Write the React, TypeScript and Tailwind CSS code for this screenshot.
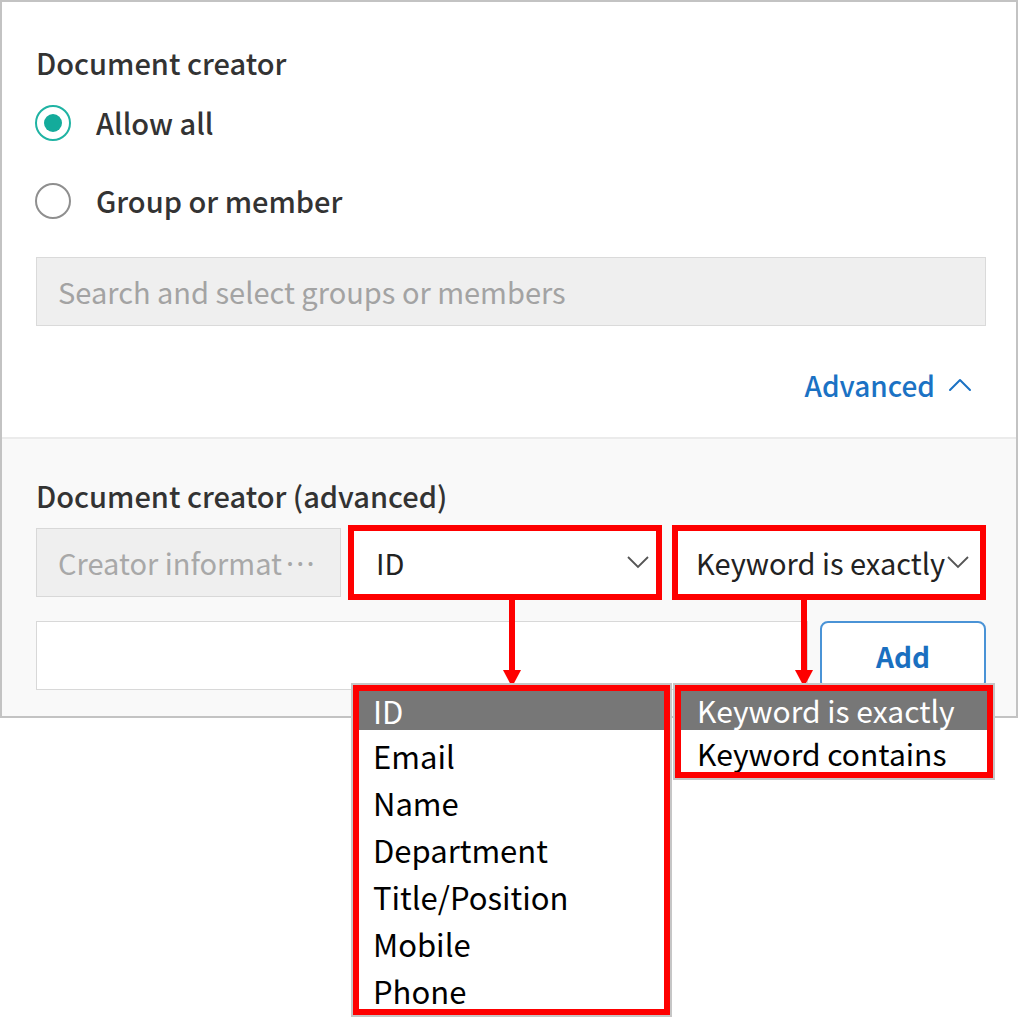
import { ChevronUp } from "lucide-react"

const font = { fontFamily: '"Noto Sans CJK KR", "Noto Sans", sans-serif' }

const idOptions = ["ID", "Email", "Name", "Department", "Title/Position", "Mobile", "Phone"]
const matchOptions = ["Keyword is exactly", "Keyword contains"]

// ── Radio ───────────────────────────────────────────────────
function Radio({ checked, label }: { checked: boolean; label: string }) {
  return (
    <div className="flex items-center h-[48px]">
      <span
        className={`ml-[-1px] w-[36px] h-[36px] rounded-full flex items-center justify-center bg-white ${
          checked ? "border-2 border-[#1fb3a3]" : "border-2 border-[#8f8f8f]"
        }`}
      >
        {checked && <span className="w-[18px] h-[18px] rounded-full bg-[#14ab9b]" />}
      </span>
      <span className="ml-[25px] text-[29px] font-medium text-[#333]">{label}</span>
    </div>
  )
}

// ── Chevron (select) ────────────────────────────────────────
function Caret({ className = "" }: { className?: string }) {
  return (
    <svg className={className} width="22" height="13" viewBox="0 0 22 13" fill="none">
      <polyline points="1,1 11,11 21,1" stroke="#555" strokeWidth="1.8" />
    </svg>
  )
}

// ── Arrow annotation ────────────────────────────────────────
function Arrow({ x }: { x: number }) {
  return (
    <svg className="absolute top-[598px]" style={{ left: x - 10 }} width="20" height="90" viewBox="0 0 20 90">
      <rect x="7" y="0" width="6" height="76" fill="#fe0000" />
      <polygon points="1,72 19,72 10,89" fill="#fe0000" />
    </svg>
  )
}

export default function App() {
  return (
    <div className="relative w-[1018px] h-[1019px] bg-white overflow-hidden" style={font}>
      {/* 패널 */}
      <div className="w-[1018px] h-[718px] border-2 border-[#c3c3c3] flex flex-col">
        <div className="h-[435px] shrink-0 bg-white pl-[34px] pr-[30px] pt-[40px]">
          <div className="text-[29px] leading-[40px] font-medium text-[#333]">Document creator</div>
          <div className="mt-[17px]">
            <Radio checked label="Allow all" />
          </div>
          <div className="mt-[30px]">
            <Radio checked={false} label="Group or member" />
          </div>
          <div className="mt-[32px] h-[69px] border border-[#dadada] bg-[#efefef] flex items-center px-[21px] text-[29px] text-[#a3a3a3]">
            Search and select groups or members
          </div>
          <div className="mt-[39px] h-[40px] flex justify-end items-center gap-[5px] pr-[6px] text-[#1b72c4]">
            <span className="text-[28px] font-medium">Advanced</span>
            <ChevronUp className="w-[40px] h-[40px]" strokeWidth={1.2} />
          </div>
        </div>

        <div className="flex-1 border-t-2 border-[#ebebeb] bg-[#f9f9f9] pl-[34px] pr-[30px] pt-[36px]">
          <div className="text-[29px] leading-[40px] font-medium text-[#333]">Document creator (advanced)</div>
          <div className="mt-[10px] h-[75px] flex items-center">
            <div className="w-[307px] h-[69px] border border-[#d8d8d8] bg-[#efefef] flex items-center pl-[21px] text-[29px] text-[#a8a8a8] whitespace-nowrap">
              Creator informat<span className="tracking-[-6px]">···</span>
            </div>
            <div className="ml-[7px] w-[316px] h-[75px] border-[6px] border-[#fe0000] bg-white flex items-center justify-between pl-[22px] pr-[6px] text-[29px] text-[#222]">
              <span>ID</span>
              <Caret className="mr-[1px]" />
            </div>
            <div className="ml-[10px] w-[316px] h-[75px] border-[6px] border-[#fe0000] bg-white flex items-center pl-[18px] text-[29px] text-[#222] whitespace-nowrap">
              <span>Keyword is exactly</span>
              <Caret className="ml-[2px] shrink-0" />
            </div>
          </div>
          <div className="mt-[21px] flex gap-[12px]">
            <div className="w-[772px] h-[69px] border border-[#d8d8d8] bg-white" />
            <button className="w-[166px] h-[69px] border-2 border-[#4a93d6] rounded-[8px] bg-white text-[28px] font-bold text-[#1a6fc0]">
              Add
            </button>
          </div>
        </div>
      </div>

      <Arrow x={512} />
      <Arrow x={804} />

      {/* 드롭다운: ID */}
      <div className="absolute left-[351px] top-[683px] w-[321px] h-[334px] border-2 border-[#c6c6c6] bg-white">
        <div className="w-full h-full border-[6px] border-[#fe0000] overflow-hidden">
          {idOptions.map((o, i) => (
            <div
              key={o}
              className={`pl-[14px] text-[31px] ${
                i === 0 ? "h-[39px] leading-[39px] bg-[#777] text-white" : "h-[47px] leading-[47px] pt-[2px] text-black"
              }`}
            >
              {o}
            </div>
          ))}
        </div>
      </div>

      {/* 드롭다운: 조건 */}
      <div className="absolute left-[673px] top-[683px] w-[322px] h-[97px] border-2 border-[#c6c6c6] bg-white">
        <div className="w-full h-full border-[6px] border-[#fe0000] overflow-hidden">
          {matchOptions.map((o, i) => (
            <div
              key={o}
              className={`pl-[16px] text-[30px] whitespace-nowrap ${
                i === 0 ? "h-[39px] leading-[39px] bg-[#777] text-white" : "h-[47px] leading-[47px] text-black"
              }`}
            >
              {o}
            </div>
          ))}
        </div>
      </div>
    </div>
  )
}
